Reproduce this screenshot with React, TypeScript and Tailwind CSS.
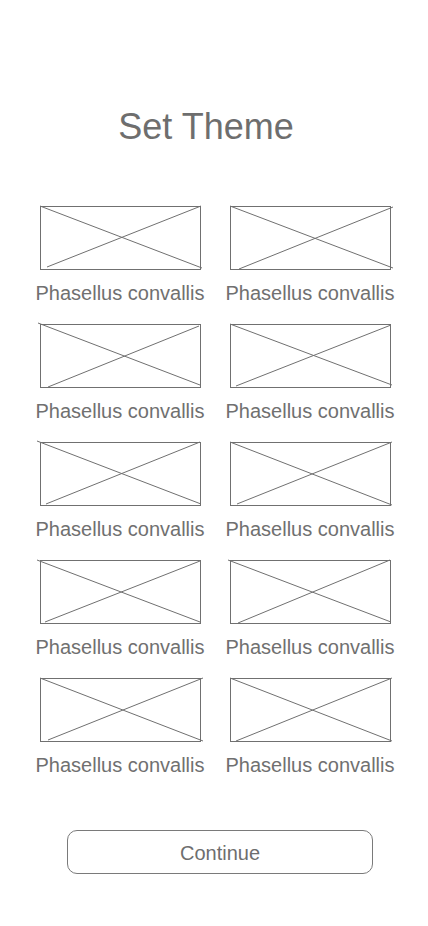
const FONT = "font-['Liberation_Sans',Arial,sans-serif]";

// slight hand-drawn jitter on the placeholder crosses, like the wireframe
const CROSSES = [
  { a: [0, 0, 162, 62], b: [7, 61, 161, 0] },
  { a: [0, 0, 163, 62], b: [9, 63, 163, 1] },
  { a: [-2, -1, 160, 61], b: [8, 63, 159, 2] },
  { a: [0, 0, 162, 61], b: [6, 62, 161, 1] },
  { a: [-3, -1, 161, 62], b: [6, 62, 160, 0] },
  { a: [0, 0, 162, 63], b: [7, 62, 162, 0] },
  { a: [-3, 0, 160, 62], b: [5, 62, 160, 1] },
  { a: [-2, 0, 161, 62], b: [8, 63, 160, 0] },
  { a: [0, 0, 163, 63], b: [8, 62, 163, 0] },
  { a: [0, 0, 162, 63], b: [6, 63, 162, 0] },
];

function Placeholder({ idx }: { idx: number }) {
  const c = CROSSES[idx];
  return (
    <div className="relative h-[64px] w-[161px] border border-[#707070]">
      <svg
        className="absolute -left-px -top-px overflow-visible"
        width={161}
        height={64}
        viewBox="0 0 161 64"
      >
        <line x1={c.a[0]} y1={c.a[1]} x2={c.a[2]} y2={c.a[3]} stroke="#707070" strokeWidth={1} />
        <line x1={c.b[0]} y1={c.b[1]} x2={c.b[2]} y2={c.b[3]} stroke="#707070" strokeWidth={1} />
      </svg>
    </div>
  );
}

function ThemeTile({ idx }: { idx: number }) {
  return (
    <div className="flex flex-col items-center">
      <Placeholder idx={idx} />
      <p className="mt-[12px] whitespace-nowrap text-[20px] leading-[23px] text-[#707070]">
        Phasellus convallis
      </p>
    </div>
  );
}

export default function App() {
  return (
    <div className={`${FONT} flex min-h-[926px] w-[428px] flex-col items-center bg-white pt-[109px]`}>
      <h1 className="mr-[16px] text-[36px] leading-[36px] text-[#6e6e6e]">Set Theme</h1>
      <div className="mt-[61px] grid w-[351px] grid-cols-[161px_161px] gap-x-[29px] gap-y-[19px] pl-[1px]">
        {CROSSES.map((_, i) => (
          <ThemeTile key={i} idx={i} />
        ))}
      </div>
      <button
        type="button"
        className="ml-[12px] mt-[53px] h-[44px] w-[306px] rounded-[10px] border border-[#7a7a7a] pt-[2px] text-[20px] leading-[23px] text-[#6e6e6e]"
      >
        Continue
      </button>
    </div>
  );
}
